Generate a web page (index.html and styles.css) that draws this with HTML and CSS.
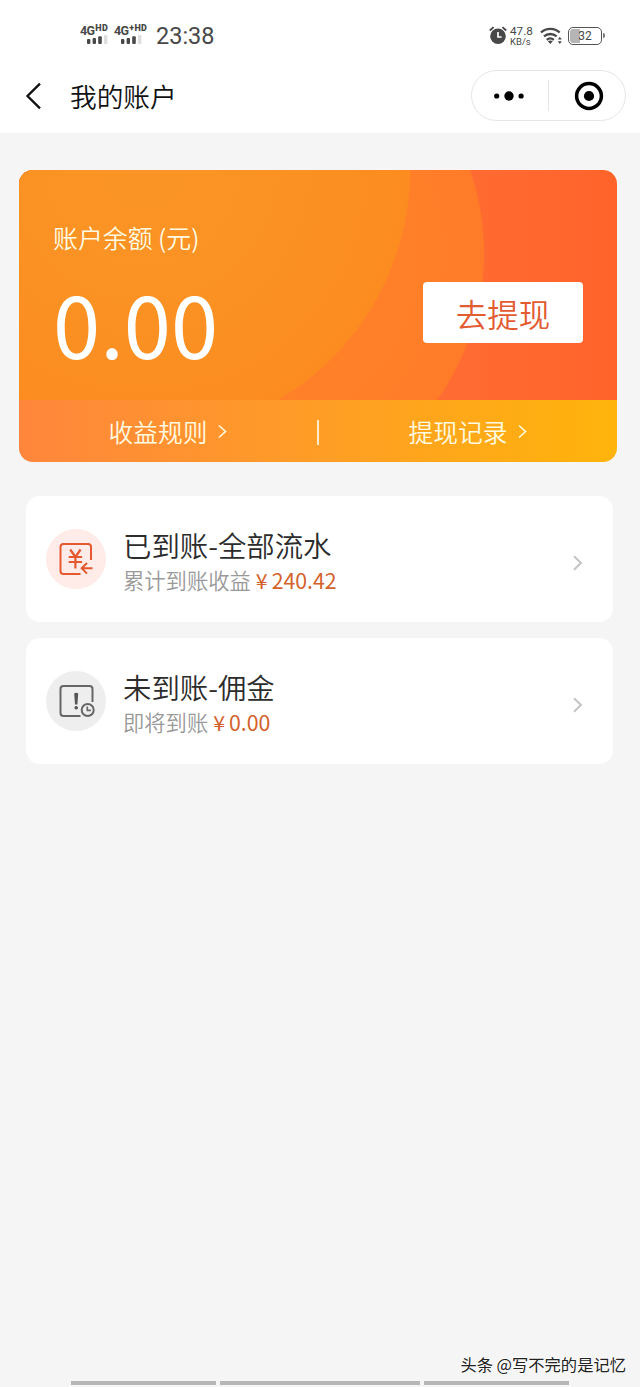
FILE: index.html
```html
<!DOCTYPE html>
<html lang="zh-CN">
<head>
<meta charset="utf-8">
<title>我的账户</title>
<link rel="stylesheet" href="styles.css">
</head>
<body>
<div class="screen">
  <header class="top">
    <div class="status">
      <div class="sim">
        <div class="sim-label">4G<span class="hd">HD</span></div>
        <svg class="bars" width="21" height="9" viewBox="0 0 21 9"><g fill="#484848"><rect x="0" y="4" width="3.4" height="5" rx="1"/><rect x="5.6" y="3" width="3.4" height="6" rx="1"/><rect x="11.2" y="1.3" width="3.6" height="7.7" rx="1"/></g><rect x="17" y="0" width="3.4" height="9" rx="1" fill="#dedede"/></svg>
      </div>
      <div class="sim sim-two">
        <div class="sim-label">4G<span class="hd">+HD</span></div>
        <svg class="bars" width="21" height="9" viewBox="0 0 21 9"><g fill="#484848"><rect x="0" y="4" width="3.4" height="5" rx="1"/><rect x="5.6" y="3" width="3.4" height="6" rx="1"/><rect x="11.2" y="1.3" width="3.6" height="7.7" rx="1"/></g><rect x="17" y="0" width="3.4" height="9" rx="1" fill="#dedede"/></svg>
      </div>
      <div class="time">23:38</div>
      <svg class="alarm" width="18" height="19" viewBox="0 0 18 19"><circle cx="9" cy="10.2" r="7.8" fill="#484848"/><path d="M.8 4.5 4.6 1.1M17.2 4.5 13.4 1.1" stroke="#484848" stroke-width="1.9" fill="none"/><path d="M9 6v5h3.6" stroke="#fff" stroke-width="1.7" fill="none"/></svg>
      <div class="speed"><div>47.8</div><div class="unit">KB/s</div></div>
      <svg class="wifi" width="23" height="18" viewBox="0 0 23 18"><g fill="none" stroke="#484848" stroke-width="2.3"><path d="M.9 5.5a13.8 13.8 0 0 1 18.8 0"/><path d="M4 9.4a9.4 9.4 0 0 1 12.6 0"/><path d="M6.8 12.8a5.2 5.2 0 0 1 7 0"/></g><path d="M7.8 14.3q2.5-1.4 5 0L10.3 17z" fill="#484848"/><path d="M17.8 12.4l2-2.7 2 2.7zM17.8 14.2h4l-2 2.7z" fill="#484848"/></svg>
      <div class="battery"><span class="level"></span><span class="percent">32</span></div>
    </div>
    <div class="nav">
      <svg class="back" width="18" height="28" viewBox="0 0 18 28"><path d="M15 1.6 2.5 14 15 26.4" fill="none" stroke="#111" stroke-width="2.3"/></svg>
      <h1 class="title">我的账户</h1>
      <div class="capsule">
        <svg class="dots" width="30" height="10" viewBox="0 0 30 10"><circle cx="2.7" cy="5" r="2.6"/><circle cx="15" cy="5" r="4.7"/><circle cx="27.1" cy="5" r="2.6"/></svg>
        <span class="capsule-line"></span>
        <svg class="target" width="30" height="30" viewBox="0 0 30 30"><circle cx="15" cy="15" r="12.4" fill="none" stroke="#000" stroke-width="3.5"/><circle cx="15" cy="15" r="5.1"/></svg>
      </div>
    </div>
  </header>

  <main class="content">
    <section class="balance">
      <div class="balance-main">
        <div>
          <div class="balance-label">账户余额 (元)</div>
          <div class="amount">0.00</div>
        </div>
        <button class="withdraw">去提现</button>
      </div>
      <div class="links">
        <a class="link">收益规则<svg width="9" height="15" viewBox="0 0 9 15"><path d="M1 1.5 7.5 7.5 1 13.5" fill="none" stroke="#fff7d8" stroke-width="1.7"/></svg></a>
        <span class="link-line"></span>
        <a class="link">提现记录<svg width="9" height="15" viewBox="0 0 9 15"><path d="M1 1.5 7.5 7.5 1 13.5" fill="none" stroke="#fff7d8" stroke-width="1.7"/></svg></a>
      </div>
    </section>

    <section class="row">
      <svg class="row-icon" width="60" height="60" viewBox="0 0 60 60"><circle cx="30" cy="30" r="30" fill="#ffece8"/><g fill="none" stroke="#e4592f" stroke-width="2"><path d="M34.5 45H17.5a3 3 0 0 1-3-3V18a3 3 0 0 1 3-3H42a3 3 0 0 1 3 3v13"/><path d="M24.2 20.5l5.2 7.5 5.2-7.5M29.4 28v11.5M22.7 28h13.4M22.7 33h13.4" stroke-width="2.2"/><path d="M46.5 39.3H35.8M41 34l-5.3 5.3 5.3 5.3"/></g></svg>
      <div class="row-text">
        <div class="row-title">已到账-全部流水</div>
        <div class="row-sub">累计到账收益<span class="money"><span class="yen">¥</span>240.42</span></div>
      </div>
      <svg class="chevron" width="10" height="16" viewBox="0 0 10 16"><path d="M1 1.2 8 8 1 14.8" fill="none" stroke="#c4c4c4" stroke-width="2"/></svg>
    </section>

    <section class="row">
      <svg class="row-icon" width="60" height="60" viewBox="0 0 60 60"><circle cx="30" cy="30" r="30" fill="#eee"/><g fill="none" stroke="#666" stroke-width="2"><path d="M34.5 45H17.5a3 3 0 0 1-3-3V18a3 3 0 0 1 3-3h26a3 3 0 0 1 3 3v13"/><circle cx="41.7" cy="39" r="6"/><path d="M41.3 35.6v3.8h3.6" stroke-width="1.6"/></g><path d="M28.2 22.5q2-1.5 4 0L31.4 33.5h-2.4z" fill="#555"/><circle cx="30.2" cy="36.7" r="1.8" fill="#555"/></svg>
      <div class="row-text">
        <div class="row-title">未到账-佣金</div>
        <div class="row-sub">即将到账<span class="money"><span class="yen">¥</span>0.00</span></div>
      </div>
      <svg class="chevron" width="10" height="16" viewBox="0 0 10 16"><path d="M1 1.2 8 8 1 14.8" fill="none" stroke="#c4c4c4" stroke-width="2"/></svg>
    </section>
  </main>

  <footer class="footer">
    <div class="watermark">头条 @写不完的是记忆</div>
    <div class="gesture"><span class="side"></span><span class="middle"></span><span class="side"></span></div>
  </footer>
</div>
</body>
</html>
```
FILE: styles.css
```css
* { box-sizing: border-box; }
body { margin: 0; background: #f5f5f5; font-family: "Noto Sans CJK SC", sans-serif; font-weight: 350; }
svg { display: block; flex: none; }
.screen { width: 640px; height: 1387px; display: flex; flex-direction: column; overflow: hidden; }

.top { height: 133px; flex: none; background: #fff; }
.status { height: 70px; display: flex; align-items: flex-start; padding-left: 80px; color: #484848; font-family: Roboto, sans-serif; font-weight: 400; }
.sim { width: 34px; padding-top: 24px; }
.sim-two { width: 42px; }
.sim-label { display: flex; align-items: flex-start; height: 12px; font-size: 12.5px; line-height: 13px; font-weight: 700; letter-spacing: -0.7px; white-space: nowrap; }
.hd { font-size: 9px; line-height: 9px; letter-spacing: 0.3px; margin-left: 1px; font-weight: 900; }
.bars { margin-left: 7px; margin-top: -1px; }
.time { width: 333px; padding-top: 23px; font-size: 23.5px; line-height: 26px; }
.alarm { margin-top: 26px; }
.speed { width: 32px; padding: 26px 0 0 3px; font-size: 11.7px; line-height: 11px; }
.unit { font-size: 9.5px; line-height: 9px; }
.wifi { margin: 27px 0 0 1px; }
.battery { position: relative; width: 34px; height: 18px; margin: 27px 0 0 5px; border: 1.5px solid #555; border-radius: 5px; display: flex; }
.battery::after { content: ""; position: absolute; right: -4px; top: 5px; width: 2px; height: 5px; background: #777; border-radius: 0 2px 2px 0; }
.level { width: 10px; margin: 1px; background: #b5b5b5; border-radius: 3px 0 0 3px; }
.percent { position: absolute; left: 0; right: 0; top: 1px; text-align: center; font-size: 12px; line-height: 14px; }

.nav { height: 51px; display: flex; align-items: center; padding: 0 14px 0 25px; }
.title { margin: 0 0 0 27px; flex: 1; font-size: 26.7px; line-height: 36px; font-weight: 350; color: #111; }
.capsule { width: 155px; height: 51px; border: 1px solid #e5e5e5; border-radius: 26px; display: flex; align-items: center; padding-left: 22px; }
.capsule-line { width: 1px; height: 31px; margin: 0 25px 0 24px; background: #e5e5e5; }

.content { flex: 1; padding: 37px 0 0; }
.balance { margin: 0 23px 0 19px; height: 292px; border-radius: 14px; overflow: hidden; }
.balance-main {
  height: 230px; display: flex; justify-content: space-between; align-items: flex-start; padding: 49px 34px 0;
  background:
    radial-gradient(circle at 125px 0, #fb9426 0, #fb9123 150px, #fc8c20 265.5px, transparent 266.5px),
    radial-gradient(circle at 211px 83px, #ff8029 0, #ff8029 180px, #ff7b28 253.5px, transparent 254.5px),
    linear-gradient(90deg, #ff6e35 65%, #ff632a 100%);
}
.balance-label { font-size: 24.9px; line-height: 36px; color: #fffae0; }
.amount { margin-top: 17px; font-size: 85px; line-height: 100px; font-weight: 400; color: #fff; }
.withdraw { width: 160px; height: 61px; margin-top: 63px; padding: 0; border: 0; border-radius: 4px; background: #fff; color: #e35b31; font: 350 31.5px/60px "Noto Sans CJK SC", sans-serif; }
.links { height: 62px; display: flex; align-items: center; background: linear-gradient(90deg, #ff863c, #ff9a29 43%, #ffb40b); }
.link { flex: 1; display: flex; justify-content: center; align-items: center; gap: 11px; font-size: 24.7px; line-height: 36px; color: #fffbe0; }
.link svg { margin-top: 0; }
.link-line { width: 2px; height: 25px; margin-top: 3px; background: #ffeccb; }

.row { height: 126px; margin: 34px 27px 0 26px; padding: 0 30px 0 20px; display: flex; align-items: center; background: #fff; border-radius: 14px; }
.row + .row { margin-top: 16px; }
.row-text { flex: 1; margin-left: 17px; padding-top: 6px; }
.row-title { font-size: 28.4px; line-height: 36px; color: #2c2c2c; }
.row-sub { font-size: 21.3px; line-height: 34px; color: #999; }
.money { color: #d4622c; margin-left: 5px; font-weight: 400; }
.yen { margin-right: 4px; }
.chevron { margin-top: 8px; }

.footer { flex: none; }
.watermark { text-align: right; padding-right: 14px; font-size: 16.3px; line-height: 24px; color: #222; text-shadow: -1px -1px 0 #fff; font-weight: 400; }
.gesture { display: flex; gap: 4px; padding: 5px 71px 2px; height: 11px; }
.gesture span { height: 4px; background: #b7b7b7; }
.side { width: 145px; }
.side:last-child { flex: 1; }
.middle { width: 200px; }
```
